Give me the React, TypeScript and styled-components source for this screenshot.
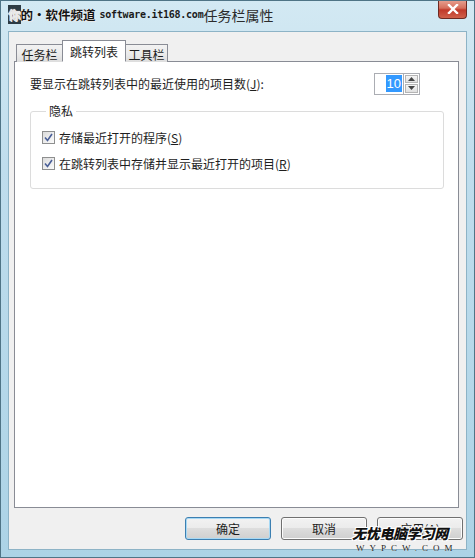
import React from "react";
import styled, { createGlobalStyle } from "styled-components";

const Global = createGlobalStyle`
  html, body { margin: 0; padding: 0; overflow: hidden; }
  body { font-family: "Noto Sans CJK SC", "Noto Sans", sans-serif; font-size: 12px; color: #1e1e1e; }
`;

const Win = styled.div`
  position: relative;
  width: 475px;
  height: 558px;
  box-sizing: border-box;
  border: 1px solid #4f7486;
  background: linear-gradient(180deg, #d3e9f3 0%, #bfdded 30%, #acd3e6 100%);
  display: flex;
  flex-direction: column;
  overflow: hidden;
`;

const TitleBar = styled.div`
  height: 30px;
  display: flex;
  align-items: center;
  padding-left: 7px;
  padding-bottom: 3px;
  box-sizing: border-box;
  position: relative;
`;

const Mark = styled.span`
  font-family: "Noto Sans CJK SC", sans-serif;
  font-weight: 700;
  font-size: 12.5px;
  color: #141414;
  text-shadow: 0 0 1px #fff, 1px 1px 0 #e8e8e8;
`;

const Hi = styled.span`
  background: #2d3b44;
  color: #e8e8e8;
`;

const MarkUrl = styled.span`
  font-family: "DejaVu Sans Mono", monospace;
  font-weight: 700;
  font-size: 10px;
  color: #1a1a1a;
  margin-left: 4px;
  letter-spacing: -0.25px;
`;

const TitleText = styled.span`
  font-size: 14px;
  color: #2b2b2b;
`;

const CloseBtn = styled.div`
  position: absolute;
  right: 7px;
  top: -1px;
  width: 29px;
  height: 19px;
  box-sizing: border-box;
  border: 1px solid #6d2a22;
  border-top: none;
  border-radius: 0 0 4px 4px;
  background: linear-gradient(180deg, #e8a393 0%, #d66f5c 45%, #c0392a 55%, #d0614b 100%);
  display: flex;
  align-items: center;
  justify-content: center;
`;

const Client = styled.div`
  flex: 1;
  margin: 0 7px 7px 7px;
  background: #f0f0f0;
  border: 1px solid #8db3c6;
  display: flex;
  flex-direction: column;
  padding: 8px 7px 8px 5px;
`;

const TabRow = styled.div`
  display: flex;
  align-items: flex-end;
  height: 22px;
  padding-left: 2px;
  position: relative;
  z-index: 2;
  margin-bottom: -1px;
`;

const Tab = styled.div<{ $active?: boolean; $w: number }>`
  width: ${(p) => p.$w}px;
  height: ${(p) => (p.$active ? 22 : 18)}px;
  box-sizing: border-box;
  border: 1px solid #898c95;
  border-bottom: ${(p) => (p.$active ? "1px solid #fff" : "none")};
  margin-left: ${(p) => (p.$active ? -1 : 0)}px;
  margin-right: ${(p) => (p.$active ? -1 : 0)}px;
  background: ${(p) =>
    p.$active ? "#fff" : "linear-gradient(180deg, #f2f2f2 0%, #ebebeb 50%, #dddddd 100%)"};
  display: flex;
  align-items: center;
  justify-content: center;
  font-size: 12px;
  color: #1e1e1e;
  position: relative;
  z-index: ${(p) => (p.$active ? 3 : 1)};
  padding-top: ${(p) => (p.$active ? 0 : 1)}px;
`;

const Panel = styled.div`
  height: 447px;
  box-sizing: border-box;
  background: #fff;
  border: 1px solid #898c95;
  padding: 10px 14px 0 15px;
  display: flex;
  flex-direction: column;
`;

const CountRow = styled.div`
  display: flex;
  align-items: center;
  justify-content: space-between;
  height: 23px;
  margin-right: 24px;
`;

const Label = styled.span`
  font-size: 12px;
`;

const U = styled.span`
  text-decoration: underline;
`;

const Spin = styled.div`
  display: flex;
  height: 22px;
`;

const SpinInput = styled.div`
  width: 29px;
  box-sizing: border-box;
  border: 1px solid #abadb3;
  border-right: none;
  background: #fff;
  display: flex;
  align-items: center;
  justify-content: flex-end;
  padding-right: 1px;
`;

const Sel = styled.span`
  background: #3399ff;
  color: #fff;
  font-family: "Liberation Sans", Arial, sans-serif;
  font-size: 13px;
  line-height: 17px;
  padding: 0 1px;
`;

const SpinArrows = styled.div`
  width: 17px;
  display: flex;
  flex-direction: column;
  border: 1px solid #abadb3;
  box-sizing: border-box;
  background: #fff;
  padding: 1px;
  gap: 1px;
`;

const Arrow = styled.div`
  flex: 1;
  border: 1px solid #b5b5b5;
  background: linear-gradient(180deg, #f4f4f4, #e0e0e0);
  display: flex;
  align-items: center;
  justify-content: center;
`;

const Group = styled.fieldset`
  margin: 9px 0 0 0;
  padding: 0 0 0 11px;
  border: 1px solid #dcdcdc;
  border-radius: 3px;
  height: 85px;
  box-sizing: border-box;
  display: flex;
  flex-direction: column;
  gap: 8px;
`;

const Legend = styled.legend`
  padding: 0 3px;
  margin-left: 4px;
  font-size: 12px;
  line-height: 14px;
`;

const CheckRow = styled.div`
  display: flex;
  align-items: center;
  gap: 4px;
  height: 18px;
  font-size: 12px;
  &:first-of-type { margin-top: 10px; }
`;

const Box = styled.div`
  width: 13px;
  height: 13px;
  box-sizing: border-box;
  border: 1px solid #8e8f8f;
  background: linear-gradient(135deg, #dcdcdc, #fbfbfb);
  display: flex;
  align-items: center;
  justify-content: center;
`;

const Buttons = styled.div`
  display: flex;
  justify-content: flex-end;
  gap: 10px;
  margin-top: 9px;
  margin-right: -4px;
`;

const Btn = styled.div<{ $default?: boolean }>`
  width: 86px;
  height: 23px;
  box-sizing: border-box;
  border: 1px solid ${(p) => (p.$default ? "#3c7fb1" : "#707070")};
  border-radius: 3px;
  background: linear-gradient(180deg, #f2f2f2 0%, #ebebeb 49%, #dddddd 50%, #cfcfcf 100%);
  box-shadow: ${(p) => (p.$default ? "inset 0 0 0 1px #a7d9f5" : "inset 0 0 0 1px #fcfcfc")};
  display: flex;
  align-items: center;
  justify-content: center;
  font-size: 12px;
  color: #1e1e1e;
`;

const WaterBig = styled.div`
  position: absolute;
  left: 351px;
  top: 522px;
  font-family: "Noto Sans CJK SC", serif;
  font-weight: 900;
  font-style: italic;
  font-size: 14px;
  color: #111;
  letter-spacing: -0.3px;
  text-shadow: -1px -1px 0 #fff, 1px -1px 0 #fff, -1px 1px 0 #fff, 1px 1px 0 #fff;
  line-height: 20px;
`;

const WaterSmall = styled.div`
  position: absolute;
  left: 355px;
  top: 542px;
  font-family: "Liberation Serif", serif;
  font-size: 9px;
  color: #222;
  letter-spacing: 5px;
  text-shadow: 0 0 1px #fff;
`;

const Check = () => (
  <svg width="9" height="9" viewBox="0 0 9 9">
    <path d="M1 4.5 L3.5 7.5 L8 1" fill="none" stroke="#4a5f97" strokeWidth="1.6" />
  </svg>
);

export default function App() {
  return (
    <>
      <Global />
      <Win>
        <TitleBar>
          <Mark>
            <Hi>你</Hi>的·软件频道
          </Mark>
          <MarkUrl>software.it168.com</MarkUrl>
          <TitleText>任务栏属性</TitleText>
          <CloseBtn>
            <svg width="12" height="10" viewBox="0 0 12 10">
              <path d="M2 1 L10 9 M10 1 L2 9" stroke="#fff" strokeWidth="2.4" strokeLinecap="square" />
            </svg>
          </CloseBtn>
        </TitleBar>
        <Client>
          <TabRow>
            <Tab $w={47}>任务栏</Tab>
            <Tab $w={64} $active>
              跳转列表
            </Tab>
            <Tab $w={43}>工具栏</Tab>
          </TabRow>
          <Panel>
            <CountRow>
              <Label>
                要显示在跳转列表中的最近使用的项目数(<U>J</U>):
              </Label>
              <Spin>
                <SpinInput>
                  <Sel>10</Sel>
                </SpinInput>
                <SpinArrows>
                  <Arrow>
                    <svg width="7" height="4" viewBox="0 0 7 4">
                      <path d="M0 4 L3.5 0 L7 4 Z" fill="#444" />
                    </svg>
                  </Arrow>
                  <Arrow>
                    <svg width="7" height="4" viewBox="0 0 7 4">
                      <path d="M0 0 L3.5 4 L7 0 Z" fill="#444" />
                    </svg>
                  </Arrow>
                </SpinArrows>
              </Spin>
            </CountRow>
            <Group>
              <Legend>隐私</Legend>
              <CheckRow>
                <Box>
                  <Check />
                </Box>
                <span>
                  存储最近打开的程序(<U>S</U>)
                </span>
              </CheckRow>
              <CheckRow>
                <Box>
                  <Check />
                </Box>
                <span>
                  在跳转列表中存储并显示最近打开的项目(<U>R</U>)
                </span>
              </CheckRow>
            </Group>
          </Panel>
          <Buttons>
            <Btn $default>确定</Btn>
            <Btn>取消</Btn>
            <Btn>应用(A)</Btn>
          </Buttons>
        </Client>
        <WaterBig>无忧电脑学习网</WaterBig>
        <WaterSmall>WYPCW.COM</WaterSmall>
      </Win>
    </>
  );
}
